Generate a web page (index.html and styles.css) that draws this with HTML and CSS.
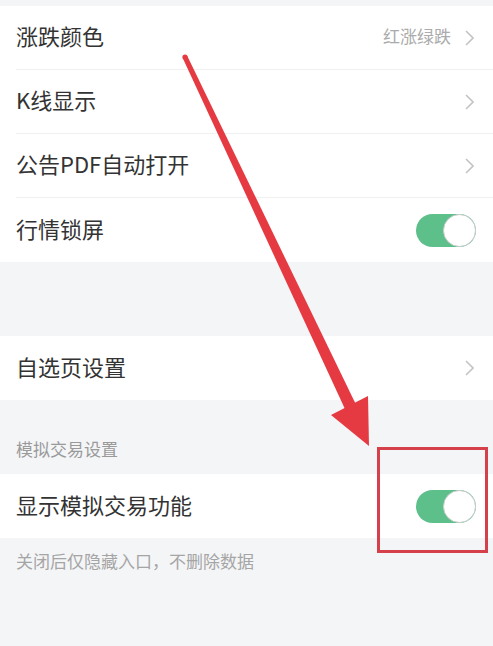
FILE: index.html
```html
<!DOCTYPE html>
<html lang="zh-CN">
<head>
<meta charset="utf-8">
<title>设置</title>
<link rel="stylesheet" href="styles.css">
</head>
<body>
<div class="page">
  <div class="group">
    <div class="row">
      <span class="label">涨跌颜色</span>
      <span class="value">红涨绿跌</span>
      <svg class="chev" viewBox="0 0 9 16" width="9" height="16"><path d="M1 1 L8 8 L1 15" fill="none" stroke="#c4c4c4" stroke-width="1.6"/></svg>
    </div>
    <div class="row">
      <span class="label">K线显示</span>
      <svg class="chev" viewBox="0 0 9 16" width="9" height="16"><path d="M1 1 L8 8 L1 15" fill="none" stroke="#c4c4c4" stroke-width="1.6"/></svg>
    </div>
    <div class="row">
      <span class="label">公告PDF自动打开</span>
      <svg class="chev" viewBox="0 0 9 16" width="9" height="16"><path d="M1 1 L8 8 L1 15" fill="none" stroke="#c4c4c4" stroke-width="1.6"/></svg>
    </div>
    <div class="row">
      <span class="label">行情锁屏</span>
      <span class="toggle"><span class="knob"></span></span>
    </div>
  </div>

  <div class="spacer"></div>

  <div class="group">
    <div class="row">
      <span class="label">自选页设置</span>
      <svg class="chev" viewBox="0 0 9 16" width="9" height="16"><path d="M1 1 L8 8 L1 15" fill="none" stroke="#c4c4c4" stroke-width="1.6"/></svg>
    </div>
  </div>

  <div class="section-title">模拟交易设置</div>

  <div class="group">
    <div class="row">
      <span class="label">显示模拟交易功能</span>
      <span class="toggle"><span class="knob"></span></span>
    </div>
  </div>

  <div class="note">关闭后仅隐藏入口，不删除数据</div>
</div>

<svg class="arrow" viewBox="0 0 493 646" width="493" height="646">
  <circle cx="185" cy="57" r="2.6" fill="#e63a42"/>
  <polygon points="187.3,55.9 182.7,58.1 346.6,412.5 357.4,407.5" fill="#e63a42"/>
  <polygon points="331,415 368,396 369,446" fill="#e63a42"/>
</svg>
<div class="highlight"></div>
</body>
</html>
```

FILE: styles.css
```css
html, body {
  margin: 0;
  padding: 0;
}
body {
  background: #f4f5f7;
  font-family: "Noto Sans CJK SC", "Noto Sans", sans-serif;
  width: 493px;
  height: 646px;
  overflow: hidden;
  position: relative;
}
.page {
  padding-top: 6px;
}
.group {
  background: #ffffff;
}
.row {
  height: 64px;
  margin-left: 16px;
  padding-right: 17px;
  display: flex;
  align-items: center;
  box-sizing: border-box;
  border-bottom: 1px solid #f0f0f0;
}
.row:last-child {
  border-bottom: none;
}
.label {
  flex: 1;
  font-size: 22px;
  color: #333333;
  line-height: 1;
  margin-top: -5px;
}
.value {
  font-size: 17px;
  color: #ababab;
  margin-right: 14px;
  margin-top: -4px;
}
.chev {
  display: block;
  margin-right: 2px;
}
.toggle {
  width: 60px;
  height: 33px;
  border-radius: 17px;
  background: #5dbf8a;
  display: flex;
  justify-content: flex-end;
}
.knob {
  width: 33px;
  height: 33px;
  box-sizing: border-box;
  border-radius: 50%;
  background: #ffffff;
  border: 1.5px solid #c9cccb;
}
.spacer {
  height: 74px;
}
.section-title {
  height: 74px;
  box-sizing: border-box;
  padding: 0 16px 13px;
  display: flex;
  align-items: flex-end;
  font-size: 17px;
  color: #9a9a9a;
  line-height: 24px;
}
.note {
  padding: 11px 16px 0;
  font-size: 17px;
  line-height: 24px;
  color: #a5a5a5;
}
.arrow {
  position: absolute;
  left: 0;
  top: 0;
  pointer-events: none;
}
.highlight {
  position: absolute;
  left: 377px;
  top: 447px;
  width: 111px;
  height: 106px;
  box-sizing: border-box;
  border: 3px solid #d5404a;
  pointer-events: none;
}
```
